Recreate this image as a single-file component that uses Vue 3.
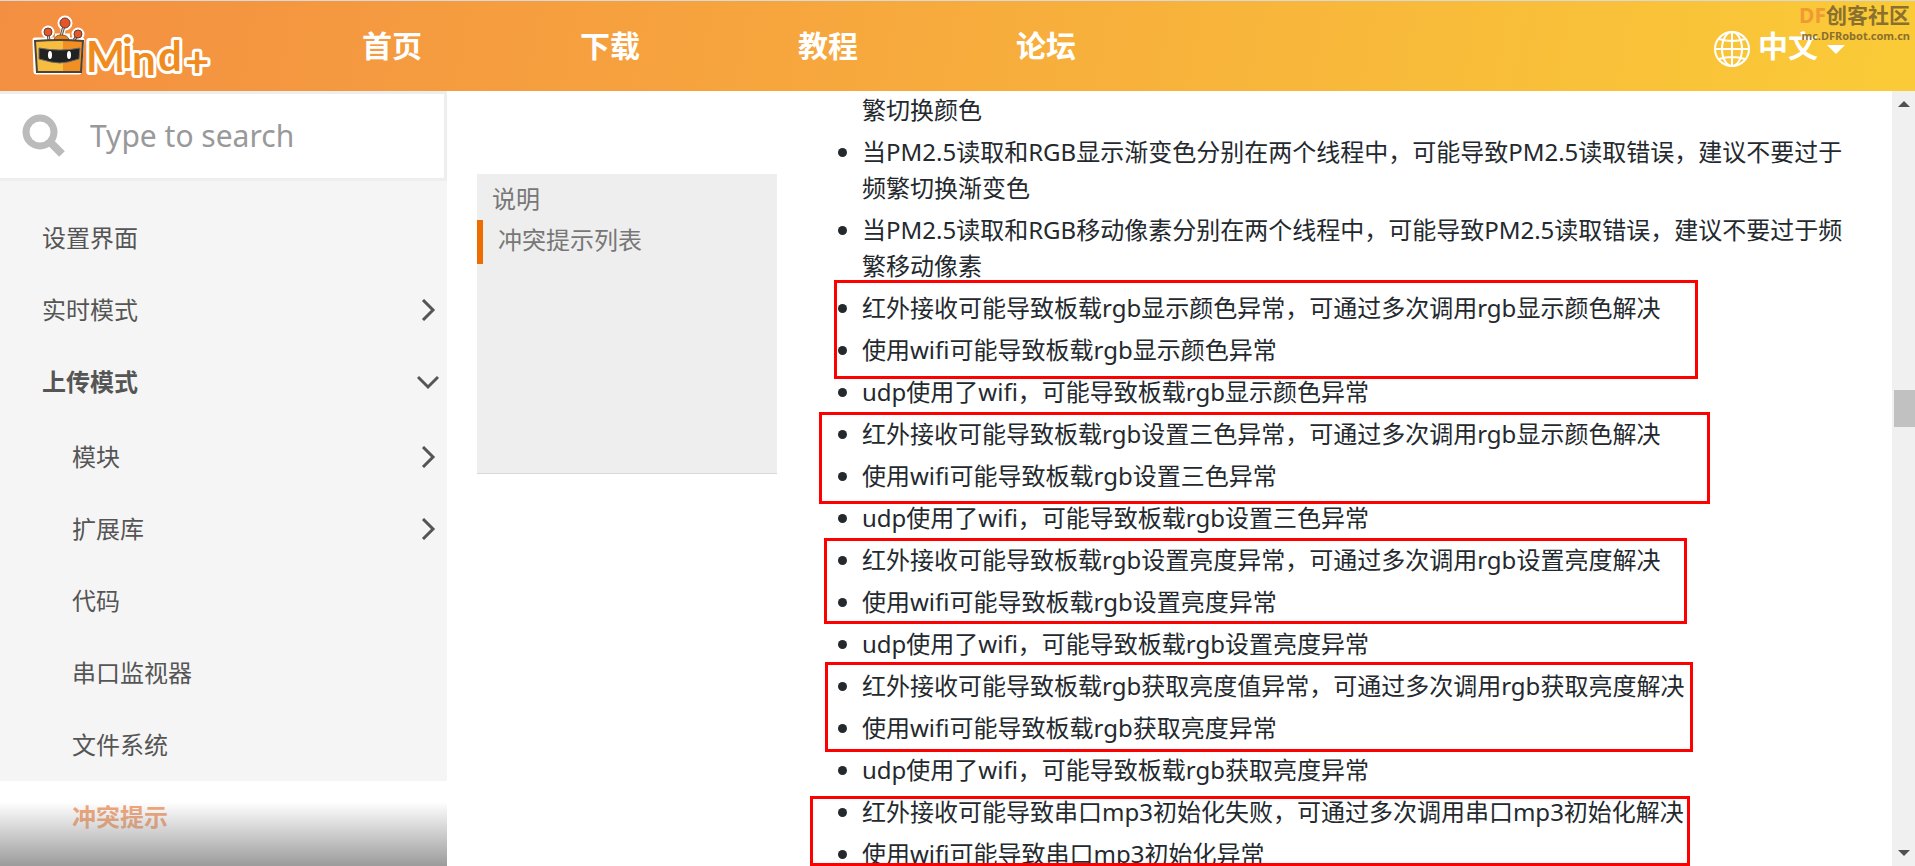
<script setup>
const navLinks = ['首页', '下载', '教程', '论坛']

const menu = [
  { label: '设置界面' },
  { label: '实时模式', arrow: 'right' },
  { label: '上传模式', arrow: 'down', open: true },
]

const submenu = [
  { label: '模块', arrow: 'right' },
  { label: '扩展库', arrow: 'right' },
  { label: '代码' },
  { label: '串口监视器' },
  { label: '文件系统' },
  { label: '冲突提示', active: true },
]

const notes = [
  '当PM2.5读取和RGB显示渐变色分别在两个线程中，可能导致PM2.5读取错误，建议不要过于频繁切换渐变色',
  '当PM2.5读取和RGB移动像素分别在两个线程中，可能导致PM2.5读取错误，建议不要过于频繁移动像素',
  '红外接收可能导致板载rgb显示颜色异常，可通过多次调用rgb显示颜色解决',
  '使用wifi可能导致板载rgb显示颜色异常',
  'udp使用了wifi，可能导致板载rgb显示颜色异常',
  '红外接收可能导致板载rgb设置三色异常，可通过多次调用rgb显示颜色解决',
  '使用wifi可能导致板载rgb设置三色异常',
  'udp使用了wifi，可能导致板载rgb设置三色异常',
  '红外接收可能导致板载rgb设置亮度异常，可通过多次调用rgb设置亮度解决',
  '使用wifi可能导致板载rgb设置亮度异常',
  'udp使用了wifi，可能导致板载rgb设置亮度异常',
  '红外接收可能导致板载rgb获取亮度值异常，可通过多次调用rgb获取亮度解决',
  '使用wifi可能导致板载rgb获取亮度异常',
  'udp使用了wifi，可能导致板载rgb获取亮度异常',
  '红外接收可能导致串口mp3初始化失败，可通过多次调用串口mp3初始化解决',
  '使用wifi可能导致串口mp3初始化异常',
]
</script>

<template>
  <div class="page">
    <header class="topbar">
      <a class="logo" href="#" aria-label="Mind+">
        <svg width="190" height="70" viewBox="0 0 190 70">
          <g fill="#fff" stroke="#fff" stroke-width="5" stroke-linejoin="round">
            <path d="M7 26 L54 26 L51 58 L8 58 Z" />
            <circle cx="20" cy="18" r="4" />
            <circle cx="37" cy="9" r="5" />
            <circle cx="50" cy="20" r="4" />
            <path d="M20 20 L21 28 M36 10 L34 22 M49 21 L45 27 M27 22 L42 22" />
          </g>
          <g stroke="#5a5148" stroke-width="3" fill="none">
            <path d="M20 20 L21 26 M36 12 L33 22 M49 22 L46 26" />
          </g>
          <g stroke="#e8e4df" stroke-width="1" fill="none">
            <path d="M20 20 L21 26 M36 12 L33 22 M49 22 L46 26" />
          </g>
          <path d="M26 26 Q27 21 33 21 Q40 21 41 26 Z" fill="#e8821c" stroke="#8a5a20" stroke-width="1" />
          <path d="M7 27 L35 26 L35 58 L9 58 Z" fill="#f7bd40" />
          <path d="M35 26 L55 27 L53 58 L35 58 Z" fill="#f28f22" />
          <path d="M7 27 Q32 25 55 27 L53 58 L9 58 Z" fill="none" stroke="#4b4338" stroke-width="2" />
          <path d="M11 34 Q32 38 52 34 L51 45 L40 48 Q32 50 23 48 L11 45 Z" fill="#222" stroke="#6f6a62" stroke-width="1" />
          <ellipse cx="22" cy="41" rx="2" ry="4" fill="#fff" />
          <ellipse cx="41" cy="41" rx="2" ry="4" fill="#fff" />
          <g fill="#e4562a" stroke="#6b3a28" stroke-width="1">
            <circle cx="20" cy="18" r="4" />
            <circle cx="37" cy="9" r="5" />
            <circle cx="50" cy="20" r="4" />
          </g>
          <text class="logo-text" x="58 94 104 130 157" y="58 54 61 57 63">Mind+</text>
        </svg>
      </a>
      <nav class="topnav">
        <a v-for="link in navLinks" :key="link" href="#">{{ link }}</a>
      </nav>
      <button class="lang" type="button">
        <svg class="globe" width="38" height="38" viewBox="0 0 38 38" fill="none" stroke="#fff" stroke-width="2">
          <circle cx="19" cy="19" r="17" />
          <ellipse cx="19" cy="19" rx="10" ry="17" />
          <path d="M19 2 V36 M2 19 H36 M6 9 Q19 13 32 9 M6 29 Q19 25 32 29" />
        </svg>
        <span>中文</span>
        <svg class="caret" width="18" height="9" viewBox="0 0 18 9"><path d="M0 0 H18 L9 9 Z" fill="#fff" /></svg>
      </button>
      <div class="watermark">
        <div class="wm-title"><span>DF</span>创客社区</div>
        <div class="wm-url">mc.DFRobot.com.cn</div>
      </div>
    </header>

    <div class="body">
      <aside class="sidebar">
        <div class="search">
          <svg width="44" height="44" viewBox="0 0 44 44" fill="none" stroke="#bbb">
            <circle cx="18" cy="18" r="14" stroke-width="7" />
            <path d="M28 28 L40 40" stroke-width="8" />
          </svg>
          <input type="search" placeholder="Type to search" aria-label="Type to search" />
        </div>
        <nav class="menu">
          <a v-for="item in menu" :key="item.label" href="#" :class="{ open: item.open }">
            <span>{{ item.label }}</span>
            <svg v-if="item.arrow" class="chevron" width="22" height="22" viewBox="0 0 22 22">
              <path :d="item.arrow === 'down' ? 'M1 6 L11 16 L21 6' : 'M6 1 L16 11 L6 21'" />
            </svg>
          </a>
          <div class="submenu">
            <a v-for="item in submenu" :key="item.label" href="#" :class="{ active: item.active }">
              <span>{{ item.label }}</span>
              <svg v-if="item.arrow" class="chevron" width="22" height="22" viewBox="0 0 22 22">
                <path d="M6 1 L16 11 L6 21" />
              </svg>
            </a>
          </div>
        </nav>
        <div class="fade"></div>
      </aside>

      <nav class="toc">
        <a href="#">说明</a>
        <a href="#" class="current">冲突提示列表</a>
      </nav>

      <main class="content">
        <ul>
          <li class="continued">繁切换颜色</li>
          <li v-for="note in notes" :key="note">{{ note }}</li>
        </ul>
        <div class="mark mark-1"></div>
        <div class="mark mark-2"></div>
        <div class="mark mark-3"></div>
        <div class="mark mark-4"></div>
        <div class="mark mark-5"></div>
      </main>

      <div class="scrollbar">
        <svg width="12" height="6" viewBox="0 0 12 6"><path d="M0 6 L6 0 L12 6 Z" fill="#505050" /></svg>
        <div class="track"><div class="thumb"></div></div>
        <svg width="12" height="6" viewBox="0 0 12 6"><path d="M0 0 L6 6 L12 0 Z" fill="#505050" /></svg>
      </div>
    </div>
  </div>
</template>

<style>
body {
  margin: 0;
}
</style>

<style scoped>
.page {
  display: flex;
  flex-direction: column;
  height: 100vh;
  overflow: hidden;
  background: #fff;
  color: #24292e;
  font-family: "Noto Sans", "Noto Sans CJK SC", sans-serif;
  font-size: 24px;
  line-height: 36px;
}

a {
  color: inherit;
  text-decoration: none;
}

.topbar {
  position: relative;
  display: flex;
  flex: none;
  align-items: center;
  height: 90px;
  border-top: 1px solid #d9d9d9;
  background: linear-gradient(100deg, #f38f42, #f6a23e 35%, #facb37);
  color: #fff;
  font-size: 30px;
  font-weight: 700;
}

.logo {
  display: flex;
  width: 334px;
  padding: 6px 0 0 28px;
}

.logo-text {
  fill: #f08c1e;
  stroke: #fff;
  stroke-width: 6px;
  stroke-linejoin: round;
  paint-order: stroke;
  font: 700 42px Lato, sans-serif;
}

.topnav {
  display: flex;
  flex: 1;
  gap: 158px;
}

.lang {
  display: flex;
  align-items: center;
  margin-right: 70px;
  padding: 0;
  border: 0;
  background: none;
  color: inherit;
  font: inherit;
}

.globe {
  margin-top: 6px;
}

.caret {
  margin-top: 6px;
}

.lang span {
  margin: 0 9px 0 7px;
}

.watermark {
  position: absolute;
  top: 1px;
  right: 5px;
  text-align: right;
  color: #8a702f;
}

.wm-title {
  font-size: 21px;
  line-height: 26px;
}

.wm-title span {
  color: #f09a33;
}

.wm-url {
  font-size: 11px;
  line-height: 16px;
}

.body {
  display: flex;
  flex: 1;
  min-height: 0;
}

.sidebar {
  position: relative;
  flex: none;
  width: 447px;
  overflow: hidden;
  background: #f5f5f5;
  color: #555;
}

.search {
  display: flex;
  align-items: center;
  gap: 24px;
  height: 84px;
  padding-left: 22px;
  border: 3px solid #eee;
  border-left: 0;
  background: #fff;
}

.search input {
  flex: 1;
  min-width: 0;
  padding: 0;
  border: 0;
  outline: 0;
  background: none;
  color: #555;
  font: inherit;
  font-size: 30px;
}

.search input::placeholder {
  color: #999;
  opacity: 1;
}

.menu {
  padding-top: 21px;
}

.menu a {
  display: flex;
  align-items: center;
  justify-content: space-between;
  height: 72px;
  padding: 0 8px 0 42px;
}

.menu .open {
  font-weight: 700;
}

.submenu {
  padding-top: 3px;
}

.submenu a {
  padding-left: 72px;
}

.submenu .active {
  height: 90px;
  align-items: flex-start;
  padding-top: 18px;
  background: #fff;
  color: #ec6a1c;
  font-weight: 700;
}

.chevron {
  fill: none;
  stroke: #555;
  stroke-width: 3;
}

.fade {
  position: absolute;
  right: 0;
  bottom: 0;
  left: 0;
  height: 64px;
  background: linear-gradient(rgba(255, 255, 255, 0.4), rgba(150, 150, 150, 0.95));
}

.toc {
  flex: none;
  width: 300px;
  height: 292px;
  margin: 83px 0 0 30px;
  padding-top: 7px;
  border-bottom: 1px solid #d8d8d8;
  background: #eee;
  color: #777;
}

.toc a {
  display: block;
  padding-left: 15px;
}

.toc .current {
  margin-top: 3px;
  padding: 2px 0 6px 15px;
  border-left: 6px solid #ef6c00;
}

.content {
  position: relative;
  flex: 1;
  min-width: 0;
  overflow: hidden;
}

.content ul {
  margin: 0;
  padding: 1px 28px 0 85px;
}

.content li {
  margin-bottom: 6px;
}

.content .continued {
  list-style: none;
}

.mark {
  position: absolute;
  box-sizing: border-box;
  border: 3px solid #f00;
}

.mark-1 {
  top: 189px;
  left: 57px;
  width: 864px;
  height: 99px;
}

.mark-2 {
  top: 321px;
  left: 42px;
  width: 891px;
  height: 92px;
}

.mark-3 {
  top: 447px;
  left: 47px;
  width: 863px;
  height: 86px;
}

.mark-4 {
  top: 571px;
  left: 48px;
  width: 868px;
  height: 90px;
}

.mark-5 {
  top: 705px;
  bottom: 0;
  left: 33px;
  width: 880px;
}

.scrollbar {
  display: flex;
  flex: none;
  flex-direction: column;
  align-items: center;
  box-sizing: border-box;
  width: 23px;
  padding: 10px 0;
  background: #f0f0f0;
}

.track {
  flex: 1;
  align-self: stretch;
  padding: 283px 0 0 2px;
}

.thumb {
  height: 37px;
  background: #c1c1c1;
}
</style>
